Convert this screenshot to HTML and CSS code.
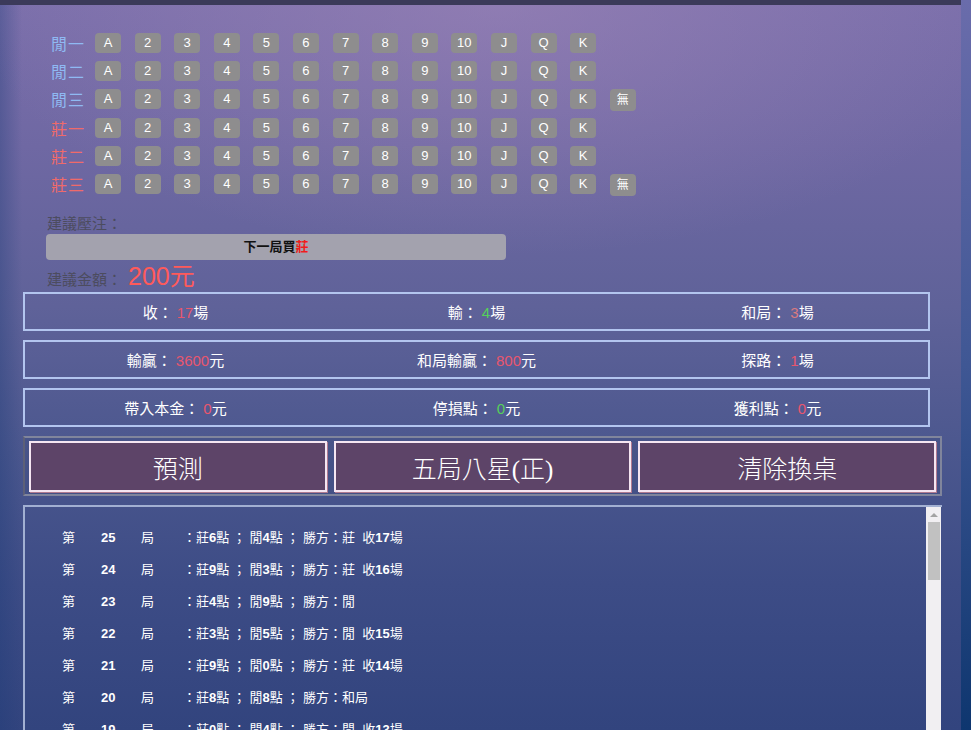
FILE: index.html
```html
<!DOCTYPE html>
<html lang="zh-Hant">
<head>
<meta charset="utf-8">
<title>預測</title>
<link rel="stylesheet" href="styles.css">
</head>
<body>
<div class="page">
  <div class="topbar"></div>
  <div class="cards">
    <div class="row"><span class="lbl p">閒一</span><span class="c">A</span><span class="c">2</span><span class="c">3</span><span class="c">4</span><span class="c">5</span><span class="c">6</span><span class="c">7</span><span class="c">8</span><span class="c">9</span><span class="c">10</span><span class="c">J</span><span class="c">Q</span><span class="c">K</span></div>
    <div class="row"><span class="lbl p">閒二</span><span class="c">A</span><span class="c">2</span><span class="c">3</span><span class="c">4</span><span class="c">5</span><span class="c">6</span><span class="c">7</span><span class="c">8</span><span class="c">9</span><span class="c">10</span><span class="c">J</span><span class="c">Q</span><span class="c">K</span></div>
    <div class="row"><span class="lbl p">閒三</span><span class="c">A</span><span class="c">2</span><span class="c">3</span><span class="c">4</span><span class="c">5</span><span class="c">6</span><span class="c">7</span><span class="c">8</span><span class="c">9</span><span class="c">10</span><span class="c">J</span><span class="c">Q</span><span class="c">K</span><span class="c none">無</span></div>
    <div class="row"><span class="lbl b">莊一</span><span class="c">A</span><span class="c">2</span><span class="c">3</span><span class="c">4</span><span class="c">5</span><span class="c">6</span><span class="c">7</span><span class="c">8</span><span class="c">9</span><span class="c">10</span><span class="c">J</span><span class="c">Q</span><span class="c">K</span></div>
    <div class="row"><span class="lbl b">莊二</span><span class="c">A</span><span class="c">2</span><span class="c">3</span><span class="c">4</span><span class="c">5</span><span class="c">6</span><span class="c">7</span><span class="c">8</span><span class="c">9</span><span class="c">10</span><span class="c">J</span><span class="c">Q</span><span class="c">K</span></div>
    <div class="row"><span class="lbl b">莊三</span><span class="c">A</span><span class="c">2</span><span class="c">3</span><span class="c">4</span><span class="c">5</span><span class="c">6</span><span class="c">7</span><span class="c">8</span><span class="c">9</span><span class="c">10</span><span class="c">J</span><span class="c">Q</span><span class="c">K</span><span class="c none">無</span></div>
  </div>

  <div class="advice">
    <div class="adv-label">建議壓注：</div>
    <div class="adv-bar">下一局買<span class="red">莊</span></div>
    <div class="adv-amount"><span class="adv-label">建議金額：</span><span class="amount">200元</span></div>
  </div>

  <div class="stats">
    <div class="stat-box">
      <div class="stat">收：<span class="v-red">17</span>場</div>
      <div class="stat">輸：<span class="v-green">4</span>場</div>
      <div class="stat">和局：<span class="v-salmon">3</span>場</div>
    </div>
    <div class="stat-box">
      <div class="stat">輸贏：<span class="v-red">3600</span>元</div>
      <div class="stat">和局輸贏：<span class="v-red">800</span>元</div>
      <div class="stat">探路：<span class="v-red">1</span>場</div>
    </div>
    <div class="stat-box">
      <div class="stat">帶入本金：<span class="v-red">0</span>元</div>
      <div class="stat">停損點：<span class="v-green">0</span>元</div>
      <div class="stat">獲利點：<span class="v-red">0</span>元</div>
    </div>
  </div>

  <div class="btns">
    <button class="btn">預測</button>
    <button class="btn">五局八星(正)</button>
    <button class="btn">清除換桌</button>
  </div>

  <div class="log">
    <div class="log-body">
      <div class="entry"><span>第</span><b>25</b><span>局</span><span>：莊<b>6</b>點 ； 閒<b>4</b>點 ； 勝方：莊&nbsp;&nbsp;收<b>17</b>場</span></div>
      <div class="entry"><span>第</span><b>24</b><span>局</span><span>：莊<b>9</b>點 ； 閒<b>3</b>點 ； 勝方：莊&nbsp;&nbsp;收<b>16</b>場</span></div>
      <div class="entry"><span>第</span><b>23</b><span>局</span><span>：莊<b>4</b>點 ； 閒<b>9</b>點 ； 勝方：閒</span></div>
      <div class="entry"><span>第</span><b>22</b><span>局</span><span>：莊<b>3</b>點 ； 閒<b>5</b>點 ； 勝方：閒&nbsp;&nbsp;收<b>15</b>場</span></div>
      <div class="entry"><span>第</span><b>21</b><span>局</span><span>：莊<b>9</b>點 ； 閒<b>0</b>點 ； 勝方：莊&nbsp;&nbsp;收<b>14</b>場</span></div>
      <div class="entry"><span>第</span><b>20</b><span>局</span><span>：莊<b>8</b>點 ； 閒<b>8</b>點 ； 勝方：和局</span></div>
      <div class="entry"><span>第</span><b>19</b><span>局</span><span>：莊<b>0</b>點 ； 閒<b>4</b>點 ； 勝方：閒&nbsp;&nbsp;收<b>13</b>場</span></div>
    </div>
    <div class="scrollbar">
      <div class="sb-arrow"></div>
      <div class="sb-thumb"></div>
    </div>
  </div>
</div>
</body>
</html>
```

FILE: styles.css
```css
html, body {
  margin: 0;
  height: 730px;
  overflow: hidden;
}
body {
  background: linear-gradient(180deg, #6a6cab 0%, #3f5794 50%, #0e366f 100%);
  font-family: "Liberation Sans", "Noto Sans CJK TC", sans-serif;
  color: #fff;
}
.page {
  width: 961px;
  height: 730px;
  overflow: hidden;
  background:
    radial-gradient(ellipse 55% 35% at 52% 0%, rgba(160, 135, 185, 0.55), rgba(160, 135, 185, 0) 100%),
    linear-gradient(90deg, rgba(30, 60, 120, 0.35) 0px, rgba(30, 60, 120, 0) 22px),
    linear-gradient(180deg, #7b6fab 0%, #6f68a3 20%, #5f6299 42%, #4b578e 62%, #3d4c86 80%, #32447e 100%);
}
.topbar {
  height: 5px;
  background: #3b3a59;
}
.cards {
  padding: 24px 0 0 51px;
}
.row {
  display: flex;
  align-items: center;
  height: 28.2px;
}
.lbl {
  width: 44px;
  font-size: 16px;
  letter-spacing: 1px;
}
.lbl.p { color: #8fb9f2; }
.lbl.b { color: #f06a6a; }
.c {
  width: 26px;
  height: 20px;
  margin-right: 13.6px;
  background: #8e8d8e;
  border-radius: 4px;
  font-size: 13px;
  line-height: 20px;
  text-align: center;
  color: #fff;
}
.c.none {
  height: 22px;
  line-height: 22px;
  margin-top: 2px;
  font-size: 12px;
}

.advice {
  padding: 15px 0 0 46px;
}
.adv-label {
  color: #4c4c5e;
  font-size: 15px;
  line-height: 21px;
  padding-left: 1px;
}
.adv-bar {
  width: 460px;
  height: 26px;
  background: #a3a2ae;
  border-radius: 4px;
  color: #111;
  font-size: 13px;
  font-weight: bold;
  line-height: 26px;
  text-align: center;
}
.red { color: #f01c1c; }
.adv-amount {
  display: flex;
  align-items: baseline;
  height: 30px;
  padding-top: 2px;
  line-height: 28px;
}
.amount {
  color: #ff5a5a;
  font-size: 25px;
  margin-left: 6px;
}

.stats {
  padding-left: 23px;
}
.stat-box {
  width: 903px;
  height: 35px;
  border: 2px solid #b3c5ef;
  display: flex;
  align-items: center;
  margin-bottom: 9px;
}
.stat {
  flex: 1;
  text-align: center;
  font-size: 15px;
}
.stat span { padding-left: 4px; }
.v-red { color: #e8566e; }
.v-green { color: #55d05a; }
.v-salmon { color: #d87a80; }

.btns {
  margin-left: 23px;
  width: 907px;
  height: 51px;
  padding: 3px 4px 2px;
  border: 2px solid #80859c;
  border-left-color: #5d6078;
  display: flex;
  gap: 7px;
  background: rgba(60, 70, 120, 0.25);
}
.btn {
  flex: 1;
  margin: 0;
  background: #5d4468;
  border: 2px solid #f5e6f2;
  box-shadow: 1px 1px 0 #b07a90;
  color: #fff;
  font-family: "Liberation Serif", "Noto Sans CJK TC", serif;
  font-size: 25px;
  font-weight: 300;
  padding: 0;
}

.log {
  margin: 9px 0 0 23px;
  width: 917px;
  height: 240px;
  border-top: 2px solid #a2b0d2;
  border-left: 2px solid #a2b0d2;
  display: flex;
}
.log-body {
  flex: 1;
  padding: 22px 0 0 37px;
}
.entry {
  display: grid;
  grid-template-columns: 39px 40px 42px auto;
  height: 32px;
  line-height: 18px;
  font-size: 13px;
  color: #fff;
}
.entry b { font-weight: bold; }
.scrollbar {
  width: 15px;
  margin-right: 1px;
  background: #f1eff2;
  display: flex;
  flex-direction: column;
  align-items: center;
}
.sb-arrow {
  width: 0;
  height: 0;
  margin-top: 6px;
  border-left: 4px solid transparent;
  border-right: 4px solid transparent;
  border-bottom: 4px solid #a3a3a3;
}
.sb-thumb {
  width: 12px;
  height: 58px;
  margin-top: 5px;
  background: #c1c1c1;
}
```
